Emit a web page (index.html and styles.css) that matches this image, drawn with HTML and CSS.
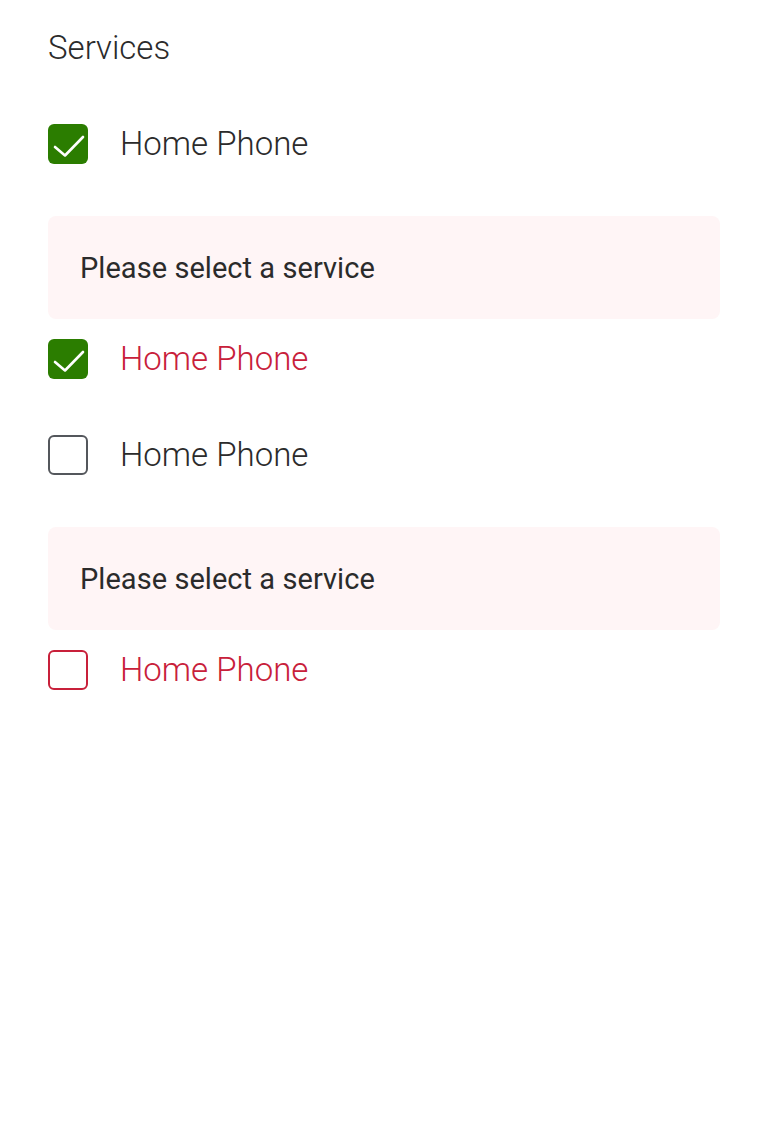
FILE: index.html
```html
<!DOCTYPE html>
<html lang="en">
<head>
<meta charset="utf-8">
<title>Services</title>
<link rel="stylesheet" href="styles.css">
</head>
<body>
<main class="page">
  <div class="heading">Services</div>

  <div class="field field-first">
    <label class="row">
      <span class="box box-checked">
        <svg viewBox="0 0 40 40" width="40" height="40"><path d="M7 23 L17 31.5 L35 13" fill="none" stroke="#fff" stroke-width="2.6" stroke-linecap="round" stroke-linejoin="round"/></svg>
      </span>
      <span class="label">Home Phone</span>
    </label>
  </div>

  <div class="field field-error">
    <div class="error">Please select a service</div>
    <label class="row">
      <span class="box box-checked">
        <svg viewBox="0 0 40 40" width="40" height="40"><path d="M7 23 L17 31.5 L35 13" fill="none" stroke="#fff" stroke-width="2.6" stroke-linecap="round" stroke-linejoin="round"/></svg>
      </span>
      <span class="label label-error">Home Phone</span>
    </label>
  </div>

  <div class="field field-plain">
    <label class="row">
      <span class="box box-empty"></span>
      <span class="label">Home Phone</span>
    </label>
  </div>

  <div class="field field-error">
    <div class="error">Please select a service</div>
    <label class="row">
      <span class="box box-empty box-empty-error"></span>
      <span class="label label-error">Home Phone</span>
    </label>
  </div>
</main>
</body>
</html>
```

FILE: styles.css
```css
html, body {
  margin: 0;
  padding: 0;
  background: #ffffff;
}
body {
  font-family: Roboto, "Liberation Sans", Arial, sans-serif;
  color: #2b2b2b;
}
.page {
  padding: 30px 48px 0 48px;
}
.heading {
  font-size: 33px;
  font-weight: 300;
  line-height: 36px;
  height: 36px;
  color: #2b2b2b;
}
.field-first {
  margin-top: 58px;
}
.field-error {
  margin-top: 52px;
}
.field-plain {
  margin-top: 56px;
}
.error {
  box-sizing: border-box;
  height: 103px;
  background: #fff5f6;
  border-radius: 8px;
  padding: 0 32px;
  display: flex;
  align-items: center;
  font-size: 29px;
  font-weight: 400;
  letter-spacing: 0.05px;
  color: #2b2b2b;
  margin-bottom: 20px;
}
.row {
  display: flex;
  align-items: center;
  height: 40px;
  gap: 32px;
}
.box {
  box-sizing: border-box;
  width: 40px;
  height: 40px;
  border-radius: 6px;
  flex: none;
  display: block;
}
.box svg {
  display: block;
}
.box-checked {
  background: #2b7d00;
}
.box-empty {
  border: 2px solid #54575c;
  background: #ffffff;
}
.box-empty-error {
  border-color: #c8203a;
}
.label {
  font-size: 33px;
  font-weight: 300;
  line-height: 40px;
  color: #2b2b2b;
}
.label-error {
  color: #c8203a;
}
```
